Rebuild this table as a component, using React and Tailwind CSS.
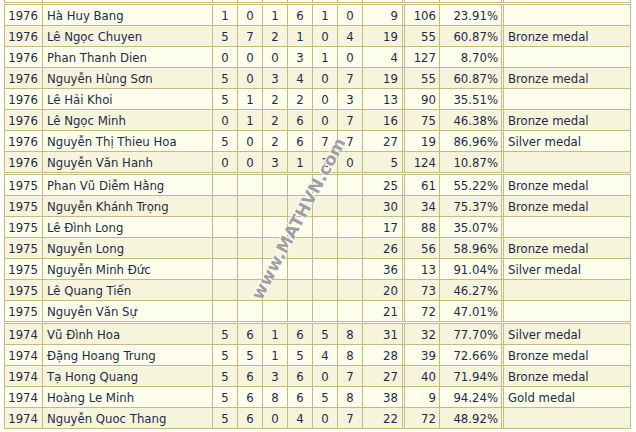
import React from "react";

const g1976 = [
  ["1976", "Hà Huy Bang", ["1", "0", "1", "6", "1", "0"], "9", "106", "23.91%", ""],
  ["1976", "Lê Ngọc Chuyen", ["5", "7", "2", "1", "0", "4"], "19", "55", "60.87%", "Bronze medal"],
  ["1976", "Phan Thanh Dien", ["0", "0", "0", "3", "1", "0"], "4", "127", "8.70%", ""],
  ["1976", "Nguyễn Hùng Sơn", ["5", "0", "3", "4", "0", "7"], "19", "55", "60.87%", "Bronze medal"],
  ["1976", "Lê Hải Khoi", ["5", "1", "2", "2", "0", "3"], "13", "90", "35.51%", ""],
  ["1976", "Lê Ngọc Minh", ["0", "1", "2", "6", "0", "7"], "16", "75", "46.38%", "Bronze medal"],
  ["1976", "Nguyễn Thị Thieu Hoa", ["5", "0", "2", "6", "7", "7"], "27", "19", "86.96%", "Silver medal"],
  ["1976", "Nguyễn Văn Hanh", ["0", "0", "3", "1", "1", "0"], "5", "124", "10.87%", ""],
];
const g1975 = [
  ["1975", "Phan Vũ Diễm Hằng", ["", "", "", "", "", ""], "25", "61", "55.22%", "Bronze medal"],
  ["1975", "Nguyễn Khánh Trọng", ["", "", "", "", "", ""], "30", "34", "75.37%", "Bronze medal"],
  ["1975", "Lê Đình Long", ["", "", "", "", "", ""], "17", "88", "35.07%", ""],
  ["1975", "Nguyễn Long", ["", "", "", "", "", ""], "26", "56", "58.96%", "Bronze medal"],
  ["1975", "Nguyễn Minh Đức", ["", "", "", "", "", ""], "36", "13", "91.04%", "Silver medal"],
  ["1975", "Lê Quang Tiến", ["", "", "", "", "", ""], "20", "73", "46.27%", ""],
  ["1975", "Nguyễn Văn Sự", ["", "", "", "", "", ""], "21", "72", "47.01%", ""],
];
const g1974 = [
  ["1974", "Vũ Đình Hoa", ["5", "6", "1", "6", "5", "8"], "31", "32", "77.70%", "Silver medal"],
  ["1974", "Đặng Hoang Trung", ["5", "5", "1", "5", "4", "8"], "28", "39", "72.66%", "Bronze medal"],
  ["1974", "Tạ Hong Quang", ["5", "6", "3", "6", "0", "7"], "27", "40", "71.94%", "Bronze medal"],
  ["1974", "Hoàng Le Minh", ["5", "6", "8", "6", "5", "8"], "38", "9", "94.24%", "Gold medal"],
  ["1974", "Nguyễn Quoc Thang", ["5", "6", "0", "4", "0", "7"], "22", "72", "48.92%", ""],
];

function Row({ r, dark, h = "h-[21px]" }) {
  const [year, name, scores, total, rank, pct, award] = r;
  return (
    <div
      className={
        "flex border-b border-[#c5bb82] " +
        h +
        " " +
        (dark ? "bg-[#f6f4dc]" : "bg-[#fefeec]")
      }
    >
      <div className="w-[38px] shrink-0 border-r border-[#c5bb82] text-right pr-[4px] leading-[22px]">{year}</div>
      <div className="w-[170px] shrink-0 border-r border-[#c5bb82] pl-[4px] leading-[22px] whitespace-nowrap">{name}</div>
      {scores.map((s, i) => (
        <div key={i} className="w-[25px] shrink-0 border-r border-[#c5bb82] text-center leading-[22px]">{s}</div>
      ))}
      <div className="w-[40px] shrink-0 border-r border-[#c5bb82] text-right pr-[4px] leading-[22px]">{total}</div>
      <div className="w-[1px] shrink-0 bg-white"></div>
      <div className="w-[36px] shrink-0 border-l border-r border-[#c5bb82] text-right pr-[3px] leading-[22px]">{rank}</div>
      <div className="w-[62px] shrink-0 border-r border-[#c5bb82] text-right pr-[3px] leading-[22px]">{pct}</div>
      <div className="w-[1px] shrink-0 bg-white"></div>
      <div className="w-[128px] shrink-0 border-l border-r border-[#c5bb82] pl-[4px] leading-[22px] whitespace-nowrap">{award}</div>
    </div>
  );
}

export default function App() {
  let idx = 0;
  const group = (rows) => (
    <div className="border-t border-l border-[#c5bb82] mt-[1px]">
      {rows.map((r, i) => {
        const dark = idx++ % 2 === 1;
        return <Row key={i} r={r} dark={dark} />;
      })}
    </div>
  );
  return (
    <div
      className="relative w-[636px] h-[432px] bg-white overflow-hidden text-[13px] text-[#1f2b45]"
      style={{ fontFamily: '"DejaVu Sans Condensed", "DejaVu Sans", sans-serif' }}
    >
      <div className="ml-[4px] w-[627px]">
        <div className="border-l border-[#c5bb82] overflow-hidden">
          <Row r={["", "", ["", "", "", "", "", ""], "", "", "", ""]} dark={false} h="h-[3px]" />
        </div>
        {group(g1976)}
        {group(g1975)}
        {group(g1974)}
      </div>
      <div
        className="absolute left-[299px] top-[219px] -translate-x-1/2 -translate-y-1/2 -rotate-[62deg] whitespace-nowrap text-[17px] font-bold text-[#a0a0a0] [text-shadow:1px_1px_0_#ffffff,-1px_-1px_0_#ffffff]"
        style={{ fontFamily: '"DejaVu Sans", sans-serif' }}
      >
        www.MATHVN.com
      </div>
    </div>
  );
}
